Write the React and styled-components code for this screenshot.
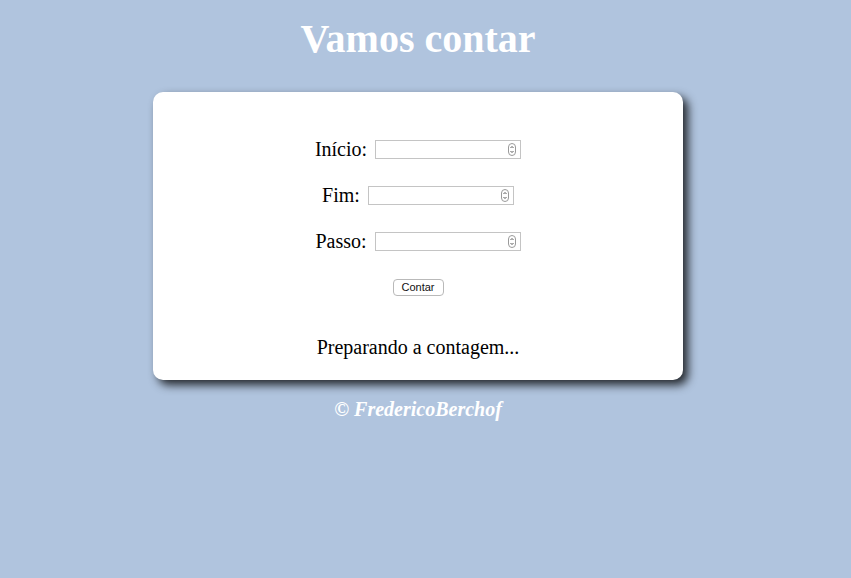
import React from "react";
import styled, { createGlobalStyle } from "styled-components";

const Global = createGlobalStyle`
  html, body { margin: 0; padding: 0; background: #b0c4de; }
  body { font-family: "Liberation Serif", "Times New Roman", serif; }
`;

const Page = styled.div`
  width: 836px;
  display: flex;
  flex-direction: column;
  align-items: center;
  padding-top: 16px;
  min-height: 578px;
  box-sizing: border-box;
`;

const Title = styled.h1`
  margin: 0 0 30px;
  font-size: 40px;
  line-height: 46px;
  font-weight: bold;
  color: #ffffff;
`;

const Card = styled.section`
  width: 530px;
  box-sizing: border-box;
  background: #ffffff;
  border-radius: 10px;
  box-shadow: 5px 5px 10px rgba(0, 0, 0, 0.8);
  padding: 34px 0 21px;
  display: flex;
  flex-direction: column;
  align-items: center;
`;

const Row = styled.div`
  height: 46px;
  display: flex;
  align-items: center;
  justify-content: center;
  gap: 8px;
`;

const Label = styled.label`
  font-size: 20px;
  line-height: 24px;
  color: #000;
`;

const Field = styled.div`
  position: relative;
  width: 146px;
  height: 19px;
`;

const Input = styled.input`
  box-sizing: border-box;
  width: 100%;
  height: 100%;
  border: 1px solid #c4c4c4;
  background: #fff;
  padding: 0 16px 0 3px;
  font-size: 13px;
  outline: none;
`;

const Spin = styled.svg`
  position: absolute;
  right: 5px;
  top: 3px;
  pointer-events: none;
`;

const Button = styled.button`
  height: 17px;
  width: 51px;
  padding: 0;
  border: 1px solid #b9b9b9;
  border-radius: 4px;
  background: #ffffff;
  font-family: "Liberation Sans", Arial, sans-serif;
  font-size: 11px;
  line-height: 15px;
  color: #111;
`;

const Result = styled.p`
  margin: 25px 0 0;
  font-size: 20px;
  line-height: 24px;
  color: #000;
`;

const Footer = styled.footer`
  margin-top: 17px;
  font-size: 20px;
  line-height: 24px;
  font-style: italic;
  font-weight: bold;
  color: #ffffff;
`;

function Spinner() {
  return (
    <Spin width="8" height="13" viewBox="0 0 8 13">
      <rect x="0.5" y="0.5" width="7" height="12" rx="3.5" fill="#fff" stroke="#9a9a9a" />
      <path d="M2.5 5 L4 3.5 L5.5 5" fill="none" stroke="#444" strokeWidth="0.9" />
      <path d="M2.5 8 L4 9.5 L5.5 8" fill="none" stroke="#444" strokeWidth="0.9" />
    </Spin>
  );
}

function NumberField({ id }) {
  return (
    <Field>
      <Input id={id} type="text" inputMode="numeric" />
      <Spinner />
    </Field>
  );
}

export default function App() {
  return (
    <>
      <Global />
      <Page>
        <Title>Vamos contar</Title>
        <Card>
          <Row>
            <Label htmlFor="inicio">Início:</Label>
            <NumberField id="inicio" />
          </Row>
          <Row>
            <Label htmlFor="fim">Fim:</Label>
            <NumberField id="fim" />
          </Row>
          <Row>
            <Label htmlFor="passo">Passo:</Label>
            <NumberField id="passo" />
          </Row>
          <Row>
            <Button type="button">Contar</Button>
          </Row>
          <Result>Preparando a contagem...</Result>
        </Card>
        <Footer>© FredericoBerchof</Footer>
      </Page>
    </>
  );
}
